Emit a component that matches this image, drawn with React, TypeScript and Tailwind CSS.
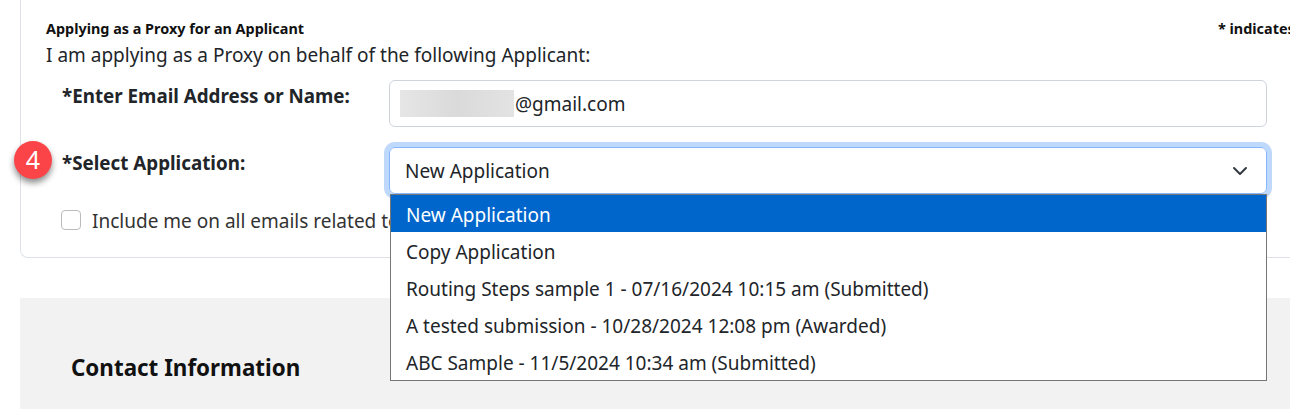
// Proxy applicant form with the application select opened
const options = [
  "New Application",
  "Copy Application",
  "Routing Steps sample 1 - 07/16/2024 10:15 am (Submitted)",
  "A tested submission - 10/28/2024 12:08 pm (Awarded)",
  "ABC Sample - 11/5/2024 10:34 am (Submitted)",
];

export default function App() {
  return (
    <div className="h-[409px] w-[1290px] overflow-hidden bg-white font-['Noto_Sans',sans-serif] text-[#212529]">
      <div className="ml-5 w-[1400px]">
        {/* Proxy card, top edge sits above the crop */}
        <div className="h-[258px] rounded-b-lg border-x border-b border-[#dee2e6] pl-[25px] pt-[20px]">
          <div className="flex w-[1172px] justify-between text-[14.4px] font-bold leading-[18px] text-[#111]">
            <span>Applying as a Proxy for an Applicant</span>
            <span className="w-0 whitespace-nowrap">* indicates required field</span>
          </div>
          <p className="mt-[4px] text-[19px] leading-[26px]">I am applying as a Proxy on behalf of the following Applicant:</p>

          <div className="mt-[12px] flex">
            <label className="w-[343px] pl-4 pt-[3px] text-[18.8px] font-bold leading-[26px]">*Enter Email Address or Name:</label>
            <div className="flex h-[47px] w-[878px] items-center rounded-md border border-[#ced4da] pl-[10px] text-[19px]">
              <span className="h-[27px] w-[114px] bg-gradient-to-r from-[#e6e6e6] via-[#dadada] to-[#e3e3e3]"></span>
              <span className="ml-[1px] pt-[2px]">@gmail.com</span>
            </div>
          </div>

          <div className="relative mt-[20px] flex">
            <span className="absolute left-[-32px] top-[-6px] flex h-[38px] w-[38px] items-center justify-center rounded-full bg-[#fb4447] text-[25px] text-white shadow-[0_4px_6px_rgba(0,0,0,0.45)]">4</span>
            <label className="w-[343px] pl-4 pt-[3px] text-[18.8px] font-bold leading-[26px]">*Select Application:</label>
            <div className="relative h-[47px] w-[878px]">
              <div className="flex h-full items-center justify-between rounded-md border border-[#86b7fe] pl-[15px] pr-[18px] text-[19px] shadow-[0_0_0_5px_#bfd9fc]">
                <span className="pt-[2px]">New Application</span>
                <svg viewBox="0 0 16 16" className="h-4 w-4 text-[#343a40]" fill="none" stroke="currentColor" strokeWidth="2" strokeLinecap="round" strokeLinejoin="round">
                  <path d="m2 5 6 6 6-6" />
                </svg>
              </div>
              {/* Opened option list */}
              <ul className="absolute left-[1px] top-[47px] z-10 w-[877px] border border-[#767676] bg-white text-[19px]">
                {options.map((o, i) => (
                  <li key={o} className={i === 0 ? "flex h-[37px] items-center bg-[#0066cc] pl-[15px] pt-[4px] text-white" : "flex h-[37px] items-center pl-[15px] pt-[4px]"}>
                    {o}
                  </li>
                ))}
              </ul>
            </div>
          </div>

          <div className="mt-[11px] flex items-center pl-[15px] text-[19px] text-[#333]">
            <span className="h-[20px] w-[20px] rounded-[4px] border border-[#bbb] bg-white"></span>
            <span className="ml-[11px] w-[298px] overflow-hidden whitespace-nowrap pt-[2px]">Include me on all emails related to this application</span>
          </div>
        </div>

        <div className="mt-[40px] h-[111px] bg-[#f2f2f2] pl-[51px] pt-[53px] text-[22.4px] font-bold leading-[34px] text-[#111]">
          Contact Information
        </div>
      </div>
    </div>
  );
}
